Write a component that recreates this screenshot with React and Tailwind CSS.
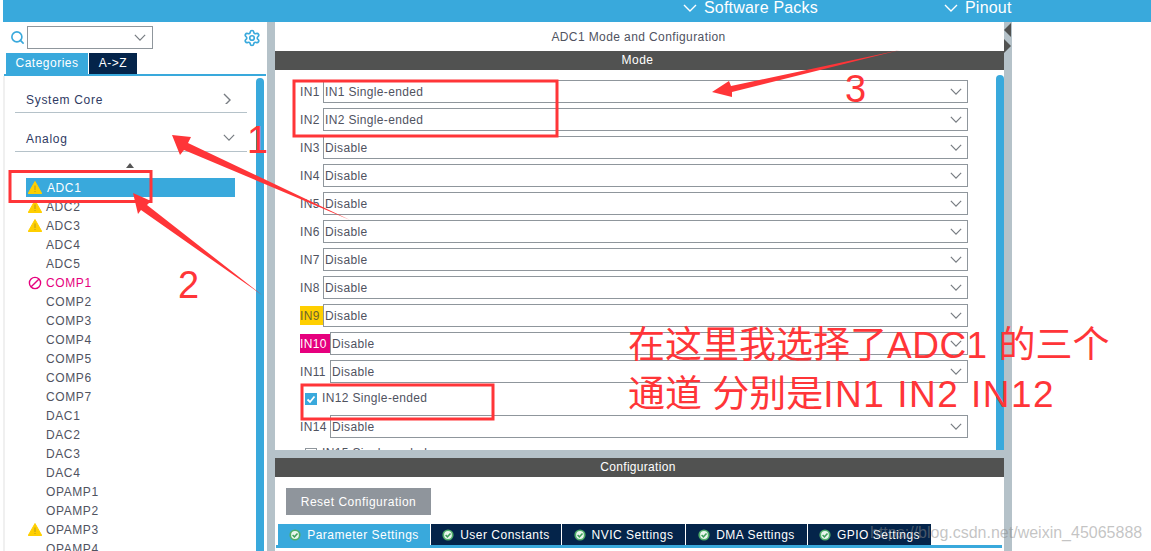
import React from 'react';
import { Search, Settings } from 'lucide-react';

const Chevron = ({ className, dir = 'down' }) => (
  <svg viewBox="0 0 14 8" className={className} fill="none" stroke="currentColor" strokeWidth="1.4">
    {dir === 'down' ? <polyline points="1,1 7,7 13,1" /> : <polyline points="1,1 7,7 1,13" />}
  </svg>
);

const Warn = () => (
  <svg viewBox="0 0 14 13" className="w-[14px] h-[13px] shrink-0">
    <path d="M7 0.5 L13.8 12.5 L0.2 12.5 Z" fill="#ffcf00" stroke="#ffcf00" strokeLinejoin="round" />
    <rect x="6.5" y="4.5" width="1" height="4.5" fill="#b89a20" />
    <rect x="6.5" y="10" width="1" height="1" fill="#b89a20" />
  </svg>
);

const Blocked = () => (
  <svg viewBox="0 0 14 14" className="w-[14px] h-[14px] shrink-0" fill="none" stroke="#e6007e" strokeWidth="1.4">
    <circle cx="7" cy="7" r="5.6" />
    <line x1="3.2" y1="10.8" x2="10.8" y2="3.2" />
  </svg>
);

const TabCheck = () => (
  <svg viewBox="0 0 12 12" className="w-3 h-3 shrink-0">
    <circle cx="6" cy="6" r="5.6" fill="#4fae6a" />
    <circle cx="6" cy="6" r="3.9" fill="#e8f5ec" />
    <polyline points="3.6,6 5.4,7.8 8.5,4.4" fill="none" stroke="#3e9f5b" strokeWidth="1.5" />
  </svg>
);

const peripherals = [
  { name: 'ADC1', status: 'warn', selected: true },
  { name: 'ADC2', status: 'warn' },
  { name: 'ADC3', status: 'warn' },
  { name: 'ADC4' },
  { name: 'ADC5' },
  { name: 'COMP1', status: 'blocked' },
  { name: 'COMP2' },
  { name: 'COMP3' },
  { name: 'COMP4' },
  { name: 'COMP5' },
  { name: 'COMP6' },
  { name: 'COMP7' },
  { name: 'DAC1' },
  { name: 'DAC2' },
  { name: 'DAC3' },
  { name: 'DAC4' },
  { name: 'OPAMP1' },
  { name: 'OPAMP2' },
  { name: 'OPAMP3', status: 'warn' },
  { name: 'OPAMP4' },
];

const channels = [
  { label: 'IN1', value: 'IN1 Single-ended' },
  { label: 'IN2', value: 'IN2 Single-ended' },
  { label: 'IN3', value: 'Disable' },
  { label: 'IN4', value: 'Disable' },
  { label: 'IN5', value: 'Disable' },
  { label: 'IN6', value: 'Disable' },
  { label: 'IN7', value: 'Disable' },
  { label: 'IN8', value: 'Disable' },
  { label: 'IN9', value: 'Disable', tone: 'warn' },
  { label: 'IN10', value: 'Disable', tone: 'error' },
  { label: 'IN11', value: 'Disable' },
  { label: 'IN12 Single-ended', check: true, checked: true },
  { label: 'IN14', value: 'Disable' },
  { label: 'IN15 Single-ended', check: true },
];

const tabs = [
  { name: 'Parameter Settings', width: 'w-[152px]', bg: 'bg-[#39a9dc]' },
  { name: 'User Constants', width: 'w-[130px]', bg: 'bg-[#04244a]' },
  { name: 'NVIC Settings', width: 'w-[123px]', bg: 'bg-[#04244a]' },
  { name: 'DMA Settings', width: 'w-[121px]', bg: 'bg-[#04244a]' },
  { name: 'GPIO Settings', width: 'w-[123px]', bg: 'bg-[#04244a]' },
];

const ChannelRow = ({ c }) => {
  if (c.check) {
    return (
      <div className="flex items-center h-[22px] pl-[5px] gap-[5px] shrink-0">
        <span className={`w-3 h-3 flex items-center justify-center shrink-0 ${c.checked ? 'bg-[#39a9dc]' : 'border border-[#8f969c]'}`}>
          {c.checked && (
            <svg viewBox="0 0 12 12" className="w-3 h-3" fill="none" stroke="#fff" strokeWidth="1.8">
              <polyline points="2.5,6.5 5,9 9.5,3.5" />
            </svg>
          )}
        </span>
        <span className="relative -top-px tracking-[0.35px]">{c.label}</span>
      </div>
    );
  }
  const wide = c.label.length > 3;
  const toneClass =
    c.tone === 'warn' ? 'bg-[#ffcf00] text-[#6b6330]' : c.tone === 'error' ? 'bg-[#e6007e] text-white' : '';
  return (
    <div className="flex items-center h-[23px] shrink-0 tracking-[0.35px]">
      <span className={`h-[19px] leading-[20px] whitespace-nowrap shrink-0 ${wide ? 'w-[30px]' : 'w-[23px]'} ${toneClass}`}>{c.label}</span>
      <div className="flex-1 h-[23px] border border-[#8f969c] flex items-center justify-between pl-[1px] pr-[5px]">
        <span>{c.value}</span>
        <Chevron className="w-3 h-[7px] text-[#777c82]" />
      </div>
    </div>
  );
};

export default function App() {
  return (
    <div className="relative w-[1151px] h-[551px] overflow-hidden bg-white flex flex-col font-['Liberation_Sans',Arial,sans-serif] text-[12px] tracking-[0.5px] text-[#50535f]">
      {/* top bar */}
      <div className="ml-[3px] h-[22px] shrink-0 bg-[#39a9dc] text-white text-[16px] tracking-[0.2px] flex items-start pl-[680px] leading-[16px]">
        <div className="flex items-center gap-[7px] w-[261px]">
          <Chevron className="w-[14px] h-2" />
          <span>Software Packs</span>
        </div>
        <div className="flex items-center gap-[7px]">
          <Chevron className="w-[14px] h-2" />
          <span>Pinout</span>
        </div>
      </div>

      <div className="flex flex-1 min-h-0 ml-[3px]">
        {/* left panel */}
        <div className="w-[264px] shrink-0 flex flex-col">
          <div className="h-[29px] shrink-0 flex items-center pl-[7px] pt-[2px] pr-[6px]">
            <Search className="w-[15px] h-[15px] text-[#39a9dc]" strokeWidth={2.6} />
            <div className="ml-[2px] w-[126px] h-[23px] border border-[#8f969c] flex items-center justify-end pr-[6px]">
              <Chevron className="w-[12px] h-[7px] text-[#777c82]" />
            </div>
            <Settings className="ml-auto w-[18px] h-[18px] text-[#39a9dc]" strokeWidth={2.2} />
          </div>
          <div className="flex mt-[2px] pl-[3px] gap-[1px] h-[21px] shrink-0 text-white leading-[20px]">
            <div className="w-[82px] bg-[#39a9dc] text-center">Categories</div>
            <div className="w-[48px] bg-[#04244a] text-center">A-&gt;Z</div>
          </div>
          <div className="h-[2px] shrink-0 bg-[#39a9dc] ml-[1px] mr-[1px]" />
          <div className="flex flex-1 min-h-0 border-l-2 border-[#f0f0f0]">
            <div className="flex-1 min-w-0 overflow-hidden flex flex-col">
              <div className="ml-[10px] mr-[9px] h-[37px] shrink-0 border-b border-[#b5c2c9] flex items-end justify-between pb-[3px] pl-[11px] pr-[16px] text-[#2f3a63] tracking-[0.7px]">
                <span>System Core</span>
                <Chevron dir="right" className="w-[14px] h-[14px] mb-[5px] text-[#777c82] -mr-[6px]" />
              </div>
              <div className="ml-[10px] mr-[9px] h-[39px] shrink-0 border-b border-[#b5c2c9] flex items-end justify-between pb-[3px] pl-[11px] pr-[12px] text-[#2f3a63] tracking-[0.7px]">
                <span>Analog</span>
                <Chevron className="w-3 h-[7px] mb-[7px] text-[#777c82]" />
              </div>
              <div className="h-[26px] shrink-0 flex justify-center items-center pr-[2px]">
                <div className="w-0 h-0 border-x-4 border-x-transparent border-b-[5px] border-b-[#555]" />
              </div>
              {peripherals.map((p) => (
                <div
                  key={p.name}
                  className={`ml-[21px] w-[209px] h-[19px] shrink-0 flex items-center pl-[2px] tracking-[0.6px] ${p.selected ? 'bg-[#39a9dc] text-white' : ''} ${p.status === 'blocked' ? 'text-[#e6007e]' : ''}`}
                >
                  <span className="w-[14px] shrink-0">
                    {p.status === 'warn' && <Warn />}
                    {p.status === 'blocked' && <Blocked />}
                  </span>
                  <span className={p.selected ? 'ml-[5px]' : 'ml-[4px]'}>{p.name}</span>
                </div>
              ))}
            </div>
            <div className="w-2 mt-[2px] mr-[3px] shrink-0 bg-[#39a9dc] rounded-t" />
          </div>
        </div>

        <div className="w-2 shrink-0 bg-[#b5c2c9]" />

        {/* center panel */}
        <div className="w-[729px] shrink-0 flex flex-col">
          <div className="h-[29px] shrink-0 flex items-center justify-center pr-[2px] pt-[1px] tracking-[0.4px]">ADC1 Mode and Configuration</div>
          <div className="h-[19px] shrink-0 bg-[#515251] text-white text-center leading-[19px] pr-[4px]">Mode</div>
          <div className="flex h-[380px] shrink-0 overflow-hidden">
            <div className="flex-1 min-w-0 pl-[25px] pr-[28px] pt-[10px] flex flex-col gap-[5px] overflow-hidden">
              {channels.map((c) => (
                <ChannelRow key={c.label} c={c} />
              ))}
            </div>
            <div className="w-2 mt-[5px] shrink-0 bg-[#39a9dc] rounded-t" />
          </div>
          <div className="h-2 shrink-0 bg-[#b5c2c9]" />
          <div className="h-[19px] shrink-0 bg-[#515251] text-white text-center leading-[19px] tracking-[0.3px] pr-[3px]">Configuration</div>
          <div className="pl-[11px] pt-[11px] shrink-0">
            <button className="w-[145px] h-[27px] bg-[#8f959c] text-white">Reset Configuration</button>
          </div>
          <div className="flex gap-[1px] pl-[3px] mt-[9px] h-[21px] shrink-0 text-white">
            {tabs.map((t) => (
              <div key={t.name} className={`flex items-center justify-center gap-[6px] whitespace-nowrap ${t.width} ${t.bg}`}>
                <TabCheck />
                <span>{t.name}</span>
              </div>
            ))}
          </div>
          <div className="h-[3px] shrink-0 bg-[#39a9dc] ml-[1px] mr-[2px]" />
        </div>

        <div className="w-2 shrink-0 bg-[#b5c2c9] relative">
          <div className="absolute left-0 top-[1px] w-0 h-0 border-y-[7px] border-y-transparent border-r-[7px] border-r-[#515251]" />
          <div className="absolute left-0 top-[17px] w-0 h-0 border-y-[7px] border-y-transparent border-l-[7px] border-l-[#515251]" />
        </div>
      </div>

      {/* hand-drawn notes on top of the screenshot */}
      <svg className="absolute inset-0 pointer-events-none" width="1151" height="551" viewBox="0 0 1151 551">
        <g fill="none" stroke="#ff3538" strokeWidth="3">
          <rect x="10" y="171.5" width="141" height="30" />
          <rect x="294" y="81" width="263" height="55" />
          <rect x="302" y="385" width="191" height="34" />
        </g>
        <g fill="#ff3538">
          <polygon points="172,135 191,137 188,143 350,220 184,150 180,155" />
          <polygon points="133,193 151,201 147,205 262,295 141,210 138,214" />
          <polygon points="712,92 729,81 731,86 900,50 732,92 732,97" />
        </g>
      </svg>
      <span className="absolute left-[247px] top-[117px] text-[38px] leading-[46px] tracking-normal text-[#ff3538]">1</span>
      <span className="absolute left-[178px] top-[262px] text-[38px] leading-[46px] tracking-normal text-[#ff3538]">2</span>
      <span className="absolute left-[845px] top-[66px] text-[38px] leading-[46px] tracking-normal text-[#ff3538]">3</span>
      <div className="absolute left-[628px] top-[321px] text-[37px] leading-[49px] tracking-normal text-[#ff3538] whitespace-nowrap font-['Liberation_Sans','Noto_Sans_CJK_SC',sans-serif]">
        <div>在这里我选择了<span className="tracking-[0.5px]">ADC1 </span>的三个</div>
        <div>通道 分别是<span className="tracking-[1.5px]">IN1 IN2 IN12</span></div>
      </div>
      <span className="absolute left-[870px] top-[523px] text-[16px] leading-[20px] tracking-normal text-[#8a8a8a]/50 whitespace-nowrap">https://blog.csdn.net/weixin_45065888</span>
    </div>
  );
}
